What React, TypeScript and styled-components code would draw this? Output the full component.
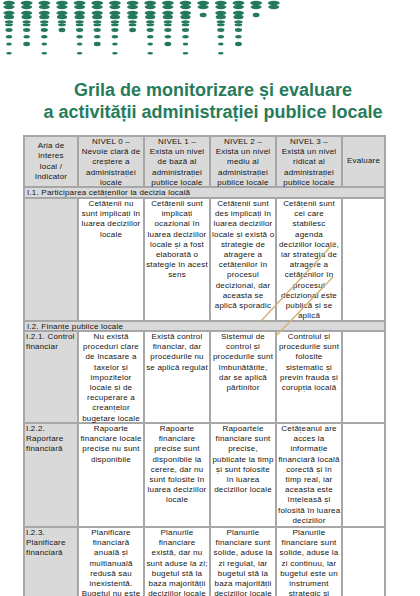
import { createGlobalStyle } from 'styled-components';
import styled from 'styled-components';

const GlobalStyle = createGlobalStyle`
  html, body {
    margin: 0;
    padding: 0;
    background: #ffffff;
  }
  body {
    font-family: "Liberation Sans", Arial, sans-serif;
  }
`;

const Page = styled.div`
  position: relative;
  width: 420px;
  height: 596px;
  overflow: hidden;
  background: #ffffff;
`;

const Dots = styled.svg`
  display: block;
`;

const Title = styled.h1`
  margin: 21px 0 0;
  padding-left: 6px;
  font-family: "Liberation Sans", Arial, sans-serif;
  font-weight: 700;
  font-size: 18px;
  line-height: 22px;
  text-align: center;
  color: #267b5b;
`;

const Grid = styled.div`
  display: grid;
  grid-template-columns: 52px 64px 64px 64px 64px 41px;
  grid-template-rows: 49px 9px 121px 8px 90px 102px 100px;
  gap: 2px;
  padding: 2px;
  margin: 12px 0 0 23px;
  width: max-content;
  background: #a7a7a7;
`;

const Cell = styled.div<{ $grey?: boolean; $align?: 'left' | 'center'; $middle?: boolean }>`
  background: ${(p) => (p.$grey ? '#d9d9d9' : '#ffffff')};
  color: #141414;
  font-size: 8px;
  line-height: 10.2px;
  letter-spacing: 0.2px;
  text-align: ${(p) => p.$align ?? 'center'};
  white-space: nowrap;
  overflow: visible;
  padding: 0 1px;
  display: flex;
  flex-direction: column;
  justify-content: ${(p) => (p.$middle ? 'center' : 'flex-start')};
`;

const Section = styled.div`
  grid-column: 1 / -1;
  background: #d9d9d9;
  color: #141414;
  font-size: 8px;
  line-height: 9px;
  letter-spacing: 0.2px;
  padding-left: 2px;
  white-space: nowrap;
`;

const Overlay = styled.svg`
  position: absolute;
  left: 0;
  top: 0;
  pointer-events: none;
`;

const counts = [7, 6, 7, 4, 7, 6, 7, 4, 7, 6, 7, 2, 7, 6, 2, 1];
const rowY = [5, 15, 23.3, 30, 36.7, 44, 53.3];

function Decoration() {
  const green = '#23795a';
  return (
    <Dots width="290" height="58" viewBox="0 0 290 58">
      {counts.map((n, c) => {
        const x = 9 + c * 17.65;
        return Array.from({ length: n }).map((_, r) => {
          const y = rowY[r];
          const last = r === n - 1 && n < 7;
          if (last && r > 0) {
            return <ellipse key={`${c}-${r}`} cx={x} cy={y} rx={3.4} ry={2.2} fill={green} />;
          }
          if (r < 2) {
            const w = r === 0 ? 6 : 5.6;
            return (
              <g key={`${c}-${r}`} fill={green}>
                <ellipse cx={x} cy={y - 2} rx={w} ry={2.2} />
                <ellipse cx={x} cy={y + 2} rx={w - 0.5} ry={2.2} />
              </g>
            );
          }
          if (r === 2) {
            return (
              <g key={`${c}-${r}`} fill={green}>
                <ellipse cx={x} cy={y - 1.5} rx={4.2} ry={1.6} />
                <ellipse cx={x} cy={y + 1.5} rx={3.8} ry={1.5} />
              </g>
            );
          }
          const rx = [3.6, 3.2, 2.8, 2.8][r - 3];
          const ry = [1.9, 1.7, 1.5, 1.2][r - 3];
          return <ellipse key={`${c}-${r}`} cx={x} cy={y} rx={rx} ry={ry} fill={green} />;
        });
      })}
    </Dots>
  );
}

function Lines({ lines }: { lines: string[] }) {
  return (
    <>
      {lines.map((l, i) => (
        <span key={i}>{l}</span>
      ))}
    </>
  );
}

const header = [
  ['NIVEL 0 –', 'Nevoie clară de', 'creștere a', 'administrației', 'locale'],
  ['NIVEL 1 –', 'Exista un nivel', 'de bază al', 'administrației', 'publice locale'],
  ['NIVEL 2 –', 'Exista un nivel', 'mediu al', 'administrației', 'publice locale'],
  ['NIVEL 3 –', 'Există un nivel', 'ridicat al', 'administrației', 'publice locale'],
];

type Row = { label: string[]; cells: string[][] };

const participare: Row = {
  label: [],
  cells: [
    ['Cetățenii nu', 'sunt implicați în', 'luarea deciziilor', 'locale'],
    ['Cetățenii sunt', 'implicați', 'ocazional în', 'luarea deciziilor', 'locale și a fost', 'elaborată o', 'stategie în acest', 'sens'],
    ['Cetățenii sunt', 'des implicați în', 'luarea deciziilor', 'locale și există o', 'strategie de', 'atragere a', 'cetățenilor în', 'procesul', 'decizional, dar', 'aceasta se', 'aplică sporadic'],
    ['Cetățenii sunt', 'cei care', 'stabilesc', 'agenda', 'deciziilor locale,', 'iar strategia de', 'atragere a', 'cetățenilor în', 'procesul', 'decizional este', 'publică și se', 'aplică'],
  ],
};

const finante: Row[] = [
  {
    label: ['I.2.1. Control', 'financiar'],
    cells: [
      ['Nu există', 'proceduri clare', 'de încasare a', 'taxelor și', 'impozitelor', 'locale și de', 'recuperare a', 'creanțelor', 'bugetare locale'],
      ['Există control', 'financiar, dar', 'procedurile nu', 'se aplică regulat'],
      ['Sistemul de', 'control și', 'procedurile sunt', 'îmbunătățite,', 'dar se aplică', 'părtinitor'],
      ['Controlul și', 'procedurile sunt', 'folosite', 'sistematic și', 'previn frauda și', 'corupția locală'],
    ],
  },
  {
    label: ['I.2.2.', 'Raportare', 'financiară'],
    cells: [
      ['Rapoarte', 'financiare locale', 'precise nu sunt', 'disponibile'],
      ['Rapoarte', 'financiare', 'precise sunt', 'disponibile la', 'cerere, dar nu', 'sunt folosite în', 'luarea deciziilor', 'locale'],
      ['Rapoartele', 'financiare sunt', 'precise,', 'publicate la timp', 'și sunt folosite', 'în luarea', 'deciziilor locale'],
      ['Cetățeanul are', 'acces la', 'informație', 'financiară locală', 'corectă și în', 'timp real, iar', 'aceasta este', 'înțeleasă și', 'folosită în luarea', 'deciziilor'],
    ],
  },
  {
    label: ['I.2.3.', 'Planificare', 'financiară'],
    cells: [
      ['Planificare', 'financiară', 'anuală și', 'multianuală', 'redusă sau', 'inexistentă.', 'Bugetul nu este'],
      ['Planurile', 'financiare', 'există, dar nu', 'sunt aduse la zi;', 'bugetul stă la', 'baza majorității', 'deciziilor locale'],
      ['Planurile', 'financiare sunt', 'solide, aduse la', 'zi regulat, iar', 'bugetul stă la', 'baza majorității', 'deciziilor locale'],
      ['Planurile', 'financiare sunt', 'solide, aduse la', 'zi continuu, iar', 'bugetul este un', 'instrument', 'strategic și'],
    ],
  },
];

function BodyRow({ row }: { row: Row }) {
  return (
    <>
      <Cell $grey $align="left">
        <Lines lines={row.label} />
      </Cell>
      {row.cells.map((c, i) => (
        <Cell key={i}>
          <Lines lines={c} />
        </Cell>
      ))}
      <Cell />
    </>
  );
}

export default function App() {
  return (
    <>
      <GlobalStyle />
      <Page>
        <Decoration />
        <Title>
          Grila de monitorizare și evaluare
          <br />a activității administrației publice locale
        </Title>
        <Grid>
          <Cell $grey $middle>
            <Lines lines={['Aria de', 'interes', 'local /', 'Indicator']} />
          </Cell>
          {header.map((h, i) => (
            <Cell key={i} $grey>
              <Lines lines={h} />
            </Cell>
          ))}
          <Cell $grey $middle>
            Evaluare
          </Cell>

          <Section>I.1. Participarea cetățenilor la decizia locală</Section>
          <BodyRow row={participare} />

          <Section>I.2. Finanțe publice locale</Section>
          {finante.map((r, i) => (
            <BodyRow key={i} row={r} />
          ))}
        </Grid>
        <Overlay width="420" height="596" viewBox="0 0 420 596">
          <line x1="260" y1="322" x2="335" y2="242" stroke="#d4b472" strokeWidth="1.4" />
          <line x1="275" y1="337" x2="333" y2="277" stroke="#d4b472" strokeWidth="1.4" />
        </Overlay>
      </Page>
    </>
  );
}
